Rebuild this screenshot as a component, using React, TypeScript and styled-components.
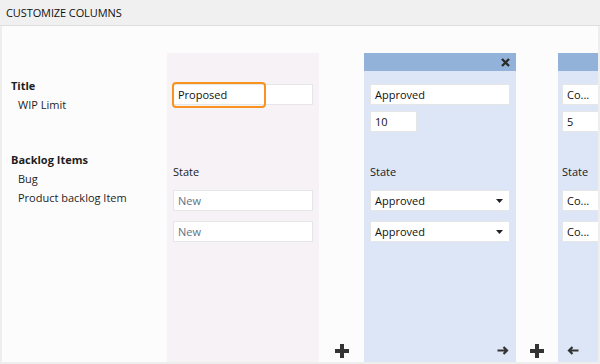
import React from "react";
import styled, { createGlobalStyle } from "styled-components";

const GlobalStyle = createGlobalStyle`
    html, body {
        margin: 0;
        padding: 0;
        background: #ffffff;
    }
    body {
        font-family: "Open Sans", "Noto Sans", sans-serif;
        font-size: 11px;
        color: #1e1e1e;
    }
`

type Tone = "pink" | "blue"

const PlusIcon = () => (
    <svg width="14" height="14" viewBox="0 0 14 14">
        <path d="M5 0h4v5h5v4H9v5H5V9H0V5h5z" fill="#333" />
    </svg>
)

const ArrowIcon = ({ dir }: { dir: "left" | "right" }) => (
    <svg width="12" height="9" viewBox="0 0 12 9" style={{ transform: dir === "left" ? "scaleX(-1)" : undefined }}>
        <path d="M0.5 4.5h9.5M6.5 1l3.5 3.5-3.5 3.5" fill="none" stroke="#333" strokeWidth="2.2" />
    </svg>
)

const CloseIcon = () => (
    <svg width="9" height="9" viewBox="0 0 9 9">
        <path d="M1 1l7 7M8 1l-7 7" stroke="#2a2a2a" strokeWidth="2.4" />
    </svg>
)

const Caret = () => (
    <svg width="7" height="4" viewBox="0 0 7 4">
        <path d="M0 0h7L3.5 4z" fill="#222" />
    </svg>
)

type FieldProps = {
    value: string,
    width?: number,
    muted?: boolean,
    select?: boolean,
    focused?: boolean,
    top: number
}

const Field = ({ value, width, muted, select, focused, top }: FieldProps) => (
    <FieldBox $width={width} $top={top}>
        <FieldText $muted={muted}>{value}</FieldText>
        {select && <CaretSlot><Caret /></CaretSlot>}
        {focused && <FocusRing />}
    </FieldBox>
)

type ColumnProps = {
    tone: Tone,
    name: string,
    limit?: string,
    states: string[],
    muted?: boolean,
    select?: boolean,
    focused?: boolean,
    narrow?: boolean,
    closable?: boolean,
    arrow?: "left" | "right"
}

const Column = ({ tone, name, limit, states, muted, select, focused, narrow, closable, arrow }: ColumnProps) => (
    <ColumnBox $tone={tone}>
        <ColumnHeader $tone={tone}>{closable && <CloseIcon />}</ColumnHeader>
        <ColumnBody $narrow={narrow}>
            <Field value={name} top={13} focused={focused} />
            <LimitSlot>{limit && <Field value={limit} width={narrow ? 60 : 47} top={0} />}</LimitSlot>
            <StateLabel>State</StateLabel>
            <Field value={states[0]} muted={muted} select={select} top={9} />
            <Field value={states[1]} muted={muted} select={select} top={10} />
        </ColumnBody>
        {arrow && (
            <ColumnFooter $align={arrow === "right" ? "flex-end" : "flex-start"}>
                <ArrowIcon dir={arrow} />
            </ColumnFooter>
        )}
    </ColumnBox>
)

export default function App() {
    return (
        <Page>
            <GlobalStyle />
            <Header>CUSTOMIZE COLUMNS</Header>
            <Body>
                <Labels>
                    <LabelGroup>
                        <GroupTitle>Title</GroupTitle>
                        <GroupItem>WIP Limit</GroupItem>
                    </LabelGroup>
                    <LabelGroup>
                        <GroupTitle>Backlog Items</GroupTitle>
                        <GroupItem>Bug</GroupItem>
                        <GroupItem>Product backlog Item</GroupItem>
                    </LabelGroup>
                </Labels>
                <Column tone="pink" name="Proposed" states={["New", "New"]} muted focused />
                <Gap $width={45}><PlusIcon /></Gap>
                <Column tone="blue" name="Approved" limit="10" states={["Approved", "Approved"]} select closable arrow="right" />
                <Gap $width={42}><PlusIcon /></Gap>
                <Column tone="blue" name="Co..." limit="5" states={["Co...", "Co..."]} narrow arrow="left" />
            </Body>
        </Page>
    )
}

const Page = styled.div`
    width: 600px;
    height: 364px;
    display: flex;
    flex-direction: column;
    overflow: hidden;
`

const Header = styled.div`
    height: 25px;
    flex-shrink: 0;
    background: #f0f0f0;
    border-bottom: 1px solid #dedede;
    display: flex;
    align-items: center;
    padding-left: 6px;
    font-size: 11px;
    color: #111;
    letter-spacing: -0.1px;
`

const Body = styled.div`
    flex: 1;
    display: flex;
    align-items: stretch;
    padding-top: 27px;
    background: #fcfcfc;
    border-left: 2px solid #eeeeee;
    border-right: 2px solid #eeeeee;
    border-bottom: 2px solid #eeeeee;
    overflow: hidden;
`

const Labels = styled.div`
    width: 165px;
    flex-shrink: 0;
    padding: 23px 0 0 9px;
    box-sizing: border-box;
    display: flex;
    flex-direction: column;
    gap: 36px;
`

const LabelGroup = styled.div`
    display: flex;
    flex-direction: column;
`

const GroupTitle = styled.div`
    font-weight: 700;
    line-height: 19px;
`

const GroupItem = styled.div`
    line-height: 19px;
    padding-left: 7px;
`

const ColumnBox = styled.div<{ $tone: Tone }>`
    width: 152px;
    flex-shrink: 0;
    display: flex;
    flex-direction: column;
    background: ${p => p.$tone === "pink" ? "#f6f2f6" : "#dde6f6"};
`

const ColumnHeader = styled.div<{ $tone: Tone }>`
    height: 18px;
    display: flex;
    align-items: center;
    justify-content: flex-end;
    padding-right: 6px;
    background: ${p => p.$tone === "pink" ? "transparent" : "#92b2da"};
`

const ColumnBody = styled.div<{ $narrow?: boolean }>`
    display: flex;
    flex-direction: column;
    padding: 0 6px 0 ${p => p.$narrow ? 4 : 6}px;
`

const FieldBox = styled.div<{ $width?: number, $top: number }>`
    position: relative;
    box-sizing: border-box;
    width: ${p => p.$width ? `${p.$width}px` : "140px"};
    height: 21px;
    margin-top: ${p => p.$top}px;
    background: #ffffff;
    border: 1px solid #e6e6e6;
    display: flex;
    align-items: center;
    padding: 0 6px 0 4px;
`

const FieldText = styled.span<{ $muted?: boolean }>`
    flex: 1;
    color: ${p => p.$muted ? "#627384" : "#111"};
    white-space: nowrap;
`

const CaretSlot = styled.span`
    display: flex;
    align-items: center;
`

const FocusRing = styled.div`
    position: absolute;
    left: -2px;
    top: -3px;
    width: 94px;
    height: 26px;
    box-sizing: border-box;
    border: 2px solid #f7931e;
    border-radius: 4px;
`

const LimitSlot = styled.div`
    height: 21px;
    margin-top: 6px;
`

const StateLabel = styled.div`
    margin-top: 30px;
    line-height: 19px;
    color: #222;
`

const ColumnFooter = styled.div<{ $align: string }>`
    margin-top: auto;
    display: flex;
    justify-content: ${p => p.$align};
    padding: 0 7px 7px 9px;
`

const Gap = styled.div<{ $width: number }>`
    width: ${p => p.$width}px;
    flex-shrink: 0;
    display: flex;
    align-items: flex-end;
    justify-content: center;
    padding-bottom: 4px;
    box-sizing: border-box;
`
